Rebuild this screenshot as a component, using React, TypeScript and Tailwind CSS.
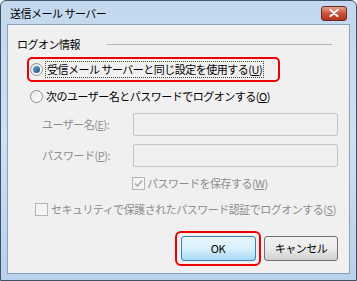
import React from 'react'

const font = { fontFamily: '"Noto Sans CJK JP", "Noto Sans", sans-serif' }

function Radio({ checked }: { checked?: boolean }) {
  return (
    <span className="relative inline-flex h-[13px] w-[13px] shrink-0 items-center justify-center rounded-full border border-[#8e8f8f] bg-gradient-to-br from-[#e6e6e6] to-[#ffffff]">
      {checked && <span className="h-[7px] w-[7px] rounded-full bg-gradient-to-br from-[#6fa6d8] to-[#1c4f86]" />}
    </span>
  )
}

function Check({ checked }: { checked?: boolean }) {
  return (
    <span className="inline-flex h-[13px] w-[13px] shrink-0 items-center justify-center border border-[#b5b5b5] bg-[#f4f4f4]">
      {checked && (
        <svg width="9" height="9" viewBox="0 0 9 9">
          <path d="M1 4.5 L3.5 7 L8 1.5" fill="none" stroke="#a5a5a5" strokeWidth="1.4" />
        </svg>
      )}
    </span>
  )
}

export default function App() {
  return (
    <div className="h-[281px] w-[357px] whitespace-nowrap bg-white text-[11px] leading-none tracking-[-0.5px]" style={font}>
      <div className="flex h-[281px] w-[357px] flex-col rounded-t-[6px] border border-[#3f5266] bg-gradient-to-b from-[#c3d8ee] via-[#cfe0f2] to-[#b8d1ec] px-[6px] pb-[6px]">
        <div className="flex h-[23px] shrink-0 items-center justify-between pl-[3px] pr-[3px]">
          <span className="pt-[2px] text-[11px] text-black">送信メール サーバー</span>
          <span className="mt-[1px] flex h-[15px] w-[26px] items-center justify-center rounded-[3px] border border-[#6b2b22] bg-gradient-to-b from-[#e6a190] via-[#c9533c] to-[#b6321d]">
            <svg width="10" height="8" viewBox="0 0 10 8">
              <path d="M1.5 1 L8.5 7 M8.5 1 L1.5 7" stroke="#ffffff" strokeWidth="2" strokeLinecap="round" />
            </svg>
          </span>
        </div>
        <div className="flex flex-1 flex-col border border-[#8aa3bd] bg-[#f0f0f0] pl-[9px] pr-[11px] text-[#000]">
          <div className="mt-[14px] flex items-center">
            <span>ログオン情報</span>
            <span className="ml-[27px] mr-[6px] h-px flex-1 bg-[#b5b5b5]" />
          </div>
          <div className="ml-[10px] mt-[7px] flex h-[25px] w-[253px] items-center rounded-[5px] border-2 border-[#ee0000] pl-[1px]">
            <Radio checked />
            <span className="ml-[2px] border border-dotted border-[#444] px-[1px] py-[2px]">
              受信メール サーバーと同じ設定を使用する(<u>U</u>)
            </span>
          </div>
          <div className="ml-[13px] mt-[8px] flex items-center">
            <Radio />
            <span className="ml-[3px]">
              次のユーザー名とパスワードでログオンする(<u>O</u>)
            </span>
          </div>
          <div className="mt-[10px] flex items-center text-[#8d8d8d]">
            <span className="ml-[25px] w-[90px]">
              ユーザー名(<u>E</u>):
            </span>
            <span className="ml-[2px] h-[23px] w-[206px] rounded-[2px] border border-[#c5c5c5] bg-[#f0f0f0]" />
          </div>
          <div className="mt-[8px] flex items-center text-[#8d8d8d]">
            <span className="ml-[25px] w-[90px]">
              パスワード(<u>P</u>):
            </span>
            <span className="ml-[2px] h-[23px] w-[206px] rounded-[2px] border border-[#c5c5c5] bg-[#f0f0f0]" />
          </div>
          <div className="ml-[115px] mt-[10px] flex items-center text-[#8d8d8d]">
            <Check checked />
            <span className="ml-[2px]">
              パスワードを保存する(<u>W</u>)
            </span>
          </div>
          <div className="ml-[18px] mt-[13px] flex items-center text-[#8d8d8d]">
            <Check />
            <span className="ml-[3px]">
              セキュリティで保護されたパスワード認証でログオンする(<u>S</u>)
            </span>
          </div>
          <div className="mt-[15px] flex items-center justify-end gap-[3px] pr-[0px]">
            <div className="flex h-[35px] w-[86px] items-center justify-center rounded-[6px] border-2 border-[#ee0000]">
              <span className="flex h-[25px] w-[75px] items-center justify-center rounded-[3px] border border-[#3c7fb1] bg-gradient-to-b from-[#eaf6fd] via-[#d9f0fc] to-[#a7d9f5] text-black">
                OK
              </span>
            </div>
            <span className="flex h-[25px] w-[74px] items-center justify-center rounded-[3px] border border-[#707070] bg-gradient-to-b from-[#f2f2f2] via-[#ebebeb] to-[#cfcfcf] text-black">
              キャンセル
            </span>
          </div>
        </div>
      </div>
    </div>
  )
}
